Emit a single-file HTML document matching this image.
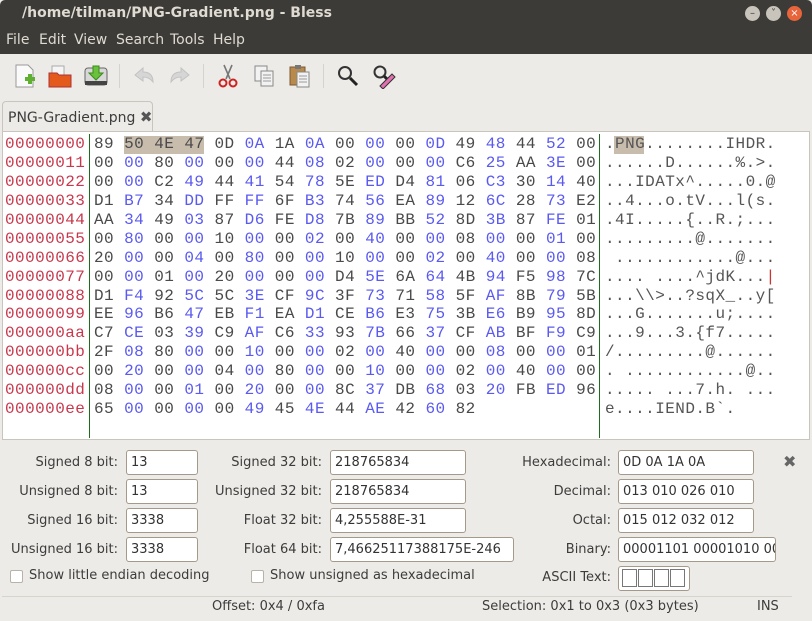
<!DOCTYPE html>
<html><head><meta charset="utf-8"><style>
*{margin:0;padding:0;box-sizing:border-box}
body{width:812px;height:621px;overflow:hidden;background:#edebe7;font-family:"DejaVu Sans","Liberation Sans",sans-serif;font-size:13px;color:#3c3c3c;position:relative}
.abs{position:absolute}
#title{left:0;top:0;width:812px;height:26px;background:#3c3b37;color:#dfdbd2;font-weight:bold;font-size:14px;line-height:26px;padding-left:22px;border-radius:5px 5px 0 0}
#menu{left:0;top:26px;width:812px;height:28px;background:#3c3b37;color:#dfdbd2;font-size:14px;line-height:28px}
#menu span{position:absolute;top:0}
.wb{top:6px;width:15px;height:15px;border-radius:50%;background:#c8c4bb;color:#3c3b37;font-size:10px;line-height:15px;text-align:center}
#tool{left:0;top:54px;width:812px;height:46px;background:#edebe7}
.ic{position:absolute;top:63px;width:26px;height:26px}
.sep{position:absolute;top:64px;width:1px;height:24px;background:#d6d3cd}
#tab{left:2px;top:101px;width:151px;height:31px;background:#edebe7;border:1px solid #c9c5bc;border-bottom:none;border-radius:4px 4px 0 0;font-size:14px;line-height:30px;padding-left:5px;white-space:nowrap}
#hex{left:2px;top:131px;width:808px;height:309px;background:#fff;border:1px solid #c9c5bc}
pre{position:absolute;font-family:"Liberation Mono",monospace;font-size:16px;letter-spacing:0.44px;line-height:18.93px;top:135px;color:#4a4a4a}
#off{left:5px;color:#c8384c}
#hx b{font-weight:normal;color:#5a5af0}
#as{left:605px;color:#555}
.vl{position:absolute;top:134px;width:1px;height:304px;background:#1f6b1f}
.sel{position:absolute;background:#c8bcad}
.lb{position:absolute;text-align:right;font-size:13px}
.in{position:absolute;height:25px;background:#fff;border:1px solid #a59a8a;border-radius:3px;font-size:13px;line-height:23px;padding-left:4px;color:#333;overflow:hidden;white-space:nowrap}
.cb{position:absolute;width:13px;height:13px;border:1px solid #b8b2a8;border-radius:2px;background:#fff}
.gl{display:inline-block;width:15px;height:18px;border:1px solid #777;margin:2px 1px 0 0;vertical-align:top}
</style></head><body>
<div id="title" class="abs">/home/tilman/PNG-Gradient.png - Bless</div>
<div class="abs wb" style="left:745px">–</div>
<div class="abs wb" style="left:766px">˅</div>
<div class="abs wb" style="left:787px;background:#e8643a;color:#fff">×</div>
<div id="menu" class="abs"><span style="left:6px">File</span><span style="left:39px">Edit</span><span style="left:74px">View</span><span style="left:116px">Search</span><span style="left:170px">Tools</span><span style="left:213px">Help</span></div>
<div id="tool" class="abs"></div>
<svg class="ic" style="left:12px" viewBox="0 0 26 26"><path d="M4 2h12l5 5v17H4z" fill="#fafafa" stroke="#999"/><rect x="13" y="14" width="10" height="4" fill="#5fb030"/><rect x="16" y="11" width="4" height="10" fill="#5fb030"/></svg>
<svg class="ic" style="left:47px" viewBox="0 0 26 26"><rect x="5" y="3" width="12" height="12" fill="#f5f5f5" stroke="#aaa"/><path d="M2 10h8l2 2h12v12H2z" fill="#e45a1c" stroke="#a33"/></svg>
<svg class="ic" style="left:83px" viewBox="0 0 26 26"><rect x="2" y="5" width="22" height="17" rx="3" fill="#d8d8d8" stroke="#666"/><rect x="2" y="18" width="22" height="4" fill="#444"/><path d="M10 3h6v7h4l-7 7-7-7h4z" fill="#6ac13a" stroke="#3b8a1f"/></svg>
<div class="sep" style="left:119px"></div>
<svg class="ic" style="left:131px" viewBox="0 0 26 26"><path d="M4 12l8-7v4c7 0 10 4 10 10-3-4-6-5-10-5v4z" fill="#d6d6d6" stroke="#c2c2c2"/></svg>
<svg class="ic" style="left:167px" viewBox="0 0 26 26"><path d="M22 12l-8-7v4C7 9 4 13 4 19c3-4 6-5 10-5v4z" fill="#d6d6d6" stroke="#c2c2c2"/></svg>
<div class="sep" style="left:203px"></div>
<svg class="ic" style="left:215px" viewBox="0 0 26 26"><path d="M9 2l6 14M17 2l-6 14" stroke="#777" stroke-width="1.6"/><circle cx="8" cy="20" r="3.5" fill="none" stroke="#c22" stroke-width="2"/><circle cx="18" cy="20" r="3.5" fill="none" stroke="#c22" stroke-width="2"/></svg>
<svg class="ic" style="left:251px" viewBox="0 0 26 26"><rect x="4" y="3" width="12" height="15" fill="#f2f2f2" stroke="#888"/><rect x="10" y="8" width="12" height="15" fill="#f2f2f2" stroke="#888"/><path d="M12 12h8M12 15h8M12 18h8" stroke="#999"/></svg>
<svg class="ic" style="left:287px" viewBox="0 0 26 26"><rect x="3" y="4" width="15" height="18" fill="#b98a4e" stroke="#7a5a30"/><rect x="8" y="2" width="6" height="4" fill="#777"/><rect x="10" y="9" width="12" height="15" fill="#f2f2f2" stroke="#888"/><path d="M12 13h8M12 16h8M12 19h8" stroke="#999"/></svg>
<div class="sep" style="left:323px"></div>
<svg class="ic" style="left:335px" viewBox="0 0 26 26"><circle cx="10" cy="10" r="6" fill="none" stroke="#333" stroke-width="2"/><path d="M15 15l7 7" stroke="#222" stroke-width="3"/></svg>
<svg class="ic" style="left:371px" viewBox="0 0 26 26"><circle cx="9" cy="9" r="5.5" fill="none" stroke="#333" stroke-width="2"/><path d="M13 13l6 6" stroke="#222" stroke-width="3"/><path d="M9 23l12-12 3 3-12 12z" fill="#e070b0" stroke="#333"/></svg>
<div id="tab" class="abs">PNG-Gradient.png <span style="font-size:15px;color:#555">✖</span></div>
<div id="hex" class="abs"></div>
<div class="sel" style="left:124px;top:136px;width:80px;height:18px"></div>
<div class="sel" style="left:614px;top:136px;width:30px;height:18px"></div>
<div class="vl" style="left:89px"></div>
<div class="vl" style="left:599px"></div>
<pre id="off">00000000
00000011
00000022
00000033
00000044
00000055
00000066
00000077
00000088
00000099
000000aa
000000bb
000000cc
000000dd
000000ee</pre>
<pre id="hx" style="left:94px">89 50 4E 47 0D <b>0A</b> 1A <b>0A</b> 00 <b>00</b> 00 <b>0D</b> 49 <b>48</b> 44 <b>52</b> 00
00 <b>00</b> 80 <b>00</b> 00 <b>00</b> 44 <b>08</b> 02 <b>00</b> 00 <b>00</b> C6 <b>25</b> AA <b>3E</b> 00
00 <b>00</b> C2 <b>49</b> 44 <b>41</b> 54 <b>78</b> 5E <b>ED</b> D4 <b>81</b> 06 <b>C3</b> 30 <b>14</b> 40
D1 <b>B7</b> 34 <b>DD</b> FF <b>FF</b> 6F <b>B3</b> 74 <b>56</b> EA <b>89</b> 12 <b>6C</b> 28 <b>73</b> E2
AA <b>34</b> 49 <b>03</b> 87 <b>D6</b> FE <b>D8</b> 7B <b>89</b> BB <b>52</b> 8D <b>3B</b> 87 <b>FE</b> 01
00 <b>80</b> 00 <b>00</b> 10 <b>00</b> 00 <b>02</b> 00 <b>40</b> 00 <b>00</b> 08 <b>00</b> 00 <b>01</b> 00
20 <b>00</b> 00 <b>04</b> 00 <b>80</b> 00 <b>00</b> 10 <b>00</b> 00 <b>02</b> 00 <b>40</b> 00 <b>00</b> 08
00 <b>00</b> 01 <b>00</b> 20 <b>00</b> 00 <b>00</b> D4 <b>5E</b> 6A <b>64</b> 4B <b>94</b> F5 <b>98</b> 7C
D1 <b>F4</b> 92 <b>5C</b> 5C <b>3E</b> CF <b>9C</b> 3F <b>73</b> 71 <b>58</b> 5F <b>AF</b> 8B <b>79</b> 5B
EE <b>96</b> B6 <b>47</b> EB <b>F1</b> EA <b>D1</b> CE <b>B6</b> E3 <b>75</b> 3B <b>E6</b> B9 <b>95</b> 8D
C7 <b>CE</b> 03 <b>39</b> C9 <b>AF</b> C6 <b>33</b> 93 <b>7B</b> 66 <b>37</b> CF <b>AB</b> BF <b>F9</b> C9
2F <b>08</b> 80 <b>00</b> 00 <b>10</b> 00 <b>00</b> 02 <b>00</b> 40 <b>00</b> 00 <b>08</b> 00 <b>00</b> 01
00 <b>20</b> 00 <b>00</b> 04 <b>00</b> 80 <b>00</b> 00 <b>10</b> 00 <b>00</b> 02 <b>00</b> 40 <b>00</b> 00
08 <b>00</b> 00 <b>01</b> 00 <b>20</b> 00 <b>00</b> 8C <b>37</b> DB <b>68</b> 03 <b>20</b> FB <b>ED</b> 96
65 <b>00</b> 00 <b>00</b> 00 <b>49</b> 45 <b>4E</b> 44 <b>AE</b> 42 <b>60</b> 82</pre>
<pre id="as">.PNG........IHDR.
......D......%.>.
...IDATx^.....0.@
..4...o.tV...l(s.
.4I.....{..R.;...
.........@.......
 ............@...
.... ....^jdK...<span style="color:#c33">|</span>
...\\>..?sqX_..y[
...G.......u;....
...9...3.{f7.....
/.........@......
. ............@..
..... ...7.h. ...
e....IEND.B`.</pre>

<div class="lb" style="left:0;width:118px;top:455px">Signed 8 bit:</div>
<div class="lb" style="left:0;width:118px;top:484px">Unsigned 8 bit:</div>
<div class="lb" style="left:0;width:118px;top:513px">Signed 16 bit:</div>
<div class="lb" style="left:0;width:118px;top:542px">Unsigned 16 bit:</div>
<div class="in" style="left:126px;top:450px;width:72px">13</div>
<div class="in" style="left:126px;top:479px;width:72px">13</div>
<div class="in" style="left:126px;top:508px;width:72px">3338</div>
<div class="in" style="left:126px;top:537px;width:72px">3338</div>
<div class="lb" style="left:200px;width:122px;top:455px">Signed 32 bit:</div>
<div class="lb" style="left:200px;width:122px;top:484px">Unsigned 32 bit:</div>
<div class="lb" style="left:200px;width:122px;top:513px">Float 32 bit:</div>
<div class="lb" style="left:200px;width:122px;top:542px">Float 64 bit:</div>
<div class="in" style="left:330px;top:450px;width:136px">218765834</div>
<div class="in" style="left:330px;top:479px;width:136px">218765834</div>
<div class="in" style="left:330px;top:508px;width:136px">4,255588E-31</div>
<div class="in" style="left:330px;top:537px;width:184px">7,46625117388175E-246</div>
<div class="lb" style="left:480px;width:131px;top:455px">Hexadecimal:</div>
<div class="lb" style="left:480px;width:131px;top:484px">Decimal:</div>
<div class="lb" style="left:480px;width:131px;top:513px">Octal:</div>
<div class="lb" style="left:480px;width:131px;top:542px">Binary:</div>
<div class="lb" style="left:480px;width:131px;top:570px">ASCII Text:</div>
<div class="in" style="left:618px;top:450px;width:136px">0D 0A 1A 0A</div>
<div class="in" style="left:618px;top:479px;width:136px">013 010 026 010</div>
<div class="in" style="left:618px;top:508px;width:136px">015 012 032 012</div>
<div class="in" style="left:618px;top:537px;width:158px">00001101 00001010 00</div>
<div class="in" style="left:618px;top:566px;width:72px;padding-left:3px"><span class="gl"></span><span class="gl"></span><span class="gl"></span><span class="gl"></span></div>
<div class="abs" style="left:783px;top:452px;font-size:16px;color:#666">✖</div>
<div class="cb" style="left:10px;top:570px"></div>
<div class="abs" style="left:29px;top:568px">Show little endian decoding</div>
<div class="cb" style="left:251px;top:570px"></div>
<div class="abs" style="left:270px;top:568px">Show unsigned as hexadecimal</div>
<div class="abs" style="left:2px;top:596px;width:790px;height:1px;background:#d8d4cc"></div>
<div class="abs" style="left:212px;top:599px">Offset: 0x4 / 0xfa</div>
<div class="abs" style="left:482px;top:599px">Selection: 0x1 to 0x3 (0x3 bytes)</div>
<div class="abs" style="left:757px;top:599px">INS</div>
</body></html>
